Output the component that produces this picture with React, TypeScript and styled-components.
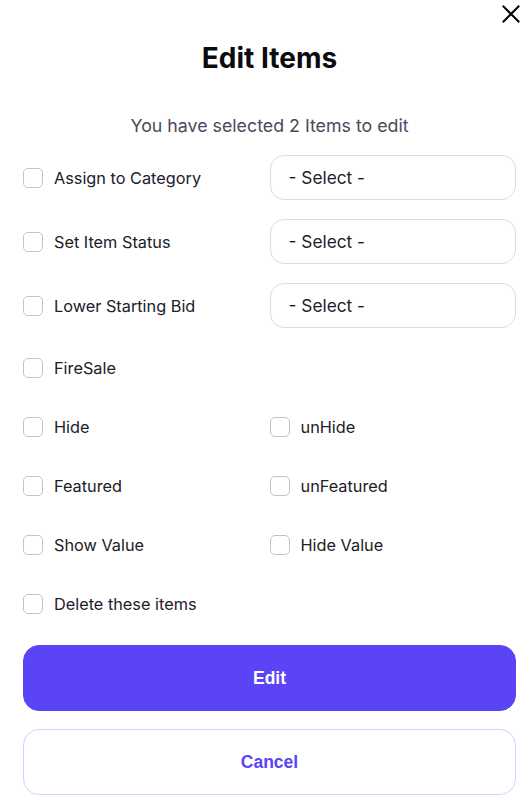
import React from "react";
import styled, { createGlobalStyle } from "styled-components";

const primary = "#5a44f5";

const GlobalStyle = createGlobalStyle`
	html, body {
		margin: 0;
		padding: 0;
		background: #ffffff;
	}

	body {
		font-family: Inter, "Noto Sans", sans-serif;
		color: #1e1e28;
	}
`;

// Modal shell
const Modal = styled.div`
	position: relative;
	width: 530px;
	box-sizing: border-box;
	padding: 0 14px 0 23px;
`;

const CloseButton = styled.button`
	position: absolute;
	top: 5px;
	right: 10px;
	width: 18px;
	height: 18px;
	padding: 0;
	border: none;
	background: none;
	cursor: pointer;
	display: flex;
	align-items: center;
	justify-content: center;
`;

const Title = styled.h1`
	margin: 0;
	padding-top: 40px;
	font-size: 28px;
	line-height: 36px;
	font-weight: 700;
	text-align: center;
	color: #0c0c10;
`;

const Subtitle = styled.p`
	margin: 38px 0 0;
	font-size: 17.8px;
	line-height: 24px;
	text-align: center;
	color: #4a4a5a;
`;

// Form rows
const SelectGroup = styled.div`
	display: flex;
	flex-direction: column;
	gap: 19px;
	margin-top: 17px;
`;

const Row = styled.div<{ $height: number }>`
	display: grid;
	grid-template-columns: 1fr 1fr;
	align-items: center;
	height: ${(p) => p.$height}px;
`;

const CheckGroup = styled.div`
	margin-top: 10px;
`;

const CheckLabel = styled.label`
	display: flex;
	align-items: center;
	gap: 11px;
	font-size: 16.3px;
	color: #202028;
	cursor: pointer;
`;

const Box = styled.span`
	width: 20px;
	height: 20px;
	box-sizing: border-box;
	border: 1.5px solid #c2c2ca;
	border-radius: 5px;
	background: #ffffff;
	flex-shrink: 0;
`;

const SelectBox = styled.div`
	height: 45px;
	box-sizing: border-box;
	border: 1px solid #dcdce2;
	border-radius: 14px;
	padding: 0 18px;
	display: flex;
	align-items: center;
	font-size: 17.3px;
	color: #1c1c28;
`;

// Actions
const Actions = styled.div`
	display: flex;
	flex-direction: column;
	gap: 18px;
	margin-top: 12px;
`;

const Button = styled.button<{ $variant: "primary" | "outline" }>`
	height: 66px;
	width: 100%;
	border-radius: 16px;
	font-family: "Liberation Sans", Arial, sans-serif;
	font-weight: 700;
	font-size: 17.5px;
	cursor: pointer;
	border: 1px solid ${(p) => (p.$variant === "primary" ? primary : "#d6d0fd")};
	background: ${(p) => (p.$variant === "primary" ? primary : "#ffffff")};
	color: ${(p) => (p.$variant === "primary" ? "#ffffff" : primary)};
`;

const Check = ({ label }: { label: string }) => (
	<CheckLabel>
		<Box />
		{label}
	</CheckLabel>
);

const selectRows = ["Assign to Category", "Set Item Status", "Lower Starting Bid"];

const checkRows: [string, string?][] = [
	["FireSale"],
	["Hide", "unHide"],
	["Featured", "unFeatured"],
	["Show Value", "Hide Value"],
	["Delete these items"],
];

export default function App() {
	return (
		<>
			<GlobalStyle />
			<Modal>
				<CloseButton aria-label="Close">
					<svg width="18" height="18" viewBox="0 0 18 18">
						<path
							d="M1.5 1.5 L16.5 16.5 M16.5 1.5 L1.5 16.5"
							stroke="#000"
							strokeWidth="2"
							strokeLinecap="square"
						/>
					</svg>
				</CloseButton>
				<Title>Edit Items</Title>
				<Subtitle>You have selected 2 Items to edit</Subtitle>

				<SelectGroup>
					{selectRows.map((label) => (
						<Row key={label} $height={45}>
							<Check label={label} />
							<SelectBox>- Select -</SelectBox>
						</Row>
					))}
				</SelectGroup>

				<CheckGroup>
					{checkRows.map(([left, right]) => (
						<Row key={left} $height={59}>
							<Check label={left} />
							{right ? <Check label={right} /> : <span />}
						</Row>
					))}
				</CheckGroup>

				<Actions>
					<Button $variant="primary">Edit</Button>
					<Button $variant="outline">Cancel</Button>
				</Actions>
			</Modal>
		</>
	);
}
